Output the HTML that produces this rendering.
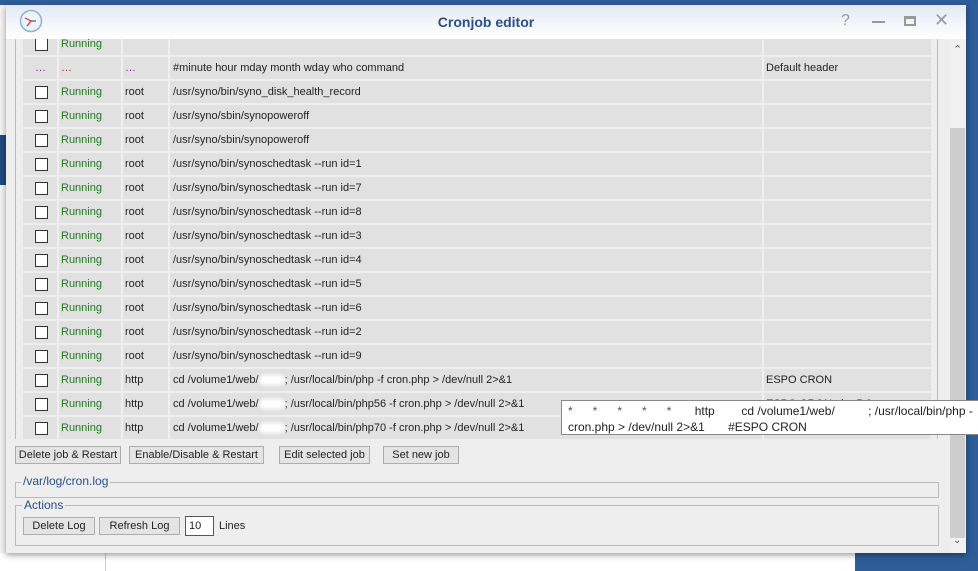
<!DOCTYPE html>
<html><head><meta charset="utf-8"><style>
*{margin:0;padding:0;box-sizing:border-box}
body{width:978px;height:571px;overflow:hidden;position:relative;background:#2e5d99;font-family:"Liberation Sans",Arial,sans-serif;font-size:11px;color:#222}
.a{position:absolute}
.win{left:6px;top:5px;width:960px;height:548px;background:#eeeeee;box-shadow:0 2px 6px rgba(0,0,0,.4)}
.title{left:0;top:0;width:960px;height:34px;background:linear-gradient(#e4eaf3,#fff)}
.row{position:absolute;left:17px;width:908px;height:22px;background:#e1e1e1}
.c{position:absolute;top:0;height:22px;line-height:22px;border-left:2px solid #f0f0f0}
.cb{position:absolute;left:12px;top:5px;width:13px;height:13px;border:1px solid #333;background:#fff}
.g{color:#1d7a1d}
.btn{position:absolute;top:441px;height:18px;border:1px solid #adadad;background:#e4e4e4;line-height:16px;text-align:center;font-size:11px}
.blob{display:inline-block;width:26px;height:10px;background:#fff;border-radius:5px;vertical-align:middle;filter:blur(1.5px)}
</style></head><body>
<div class="a" style="left:0;top:5px;width:6px;height:548px;background:#f4f4f4"></div>
<div class="a" style="left:0;top:135px;width:6px;height:50px;background:#1e4a80"></div>
<div class="a" style="left:0;top:553px;width:855px;height:18px;background:#fff"></div>
<div class="a" style="left:105px;top:553px;width:1px;height:18px;background:#ccc"></div>
<div class="a win">
 <div class="a title">
  <svg class="a" style="left:13px;top:4px" width="24" height="24" viewBox="0 0 24 24"><circle cx="12" cy="12" r="10.5" fill="#eef4fb" stroke="#8fb0d8" stroke-width="1.5"/><path d="M12 12L6 9M12 12L8 17" stroke="#c33" stroke-width="1.2"/><path d="M12 12H17" stroke="#555" stroke-width="1.2"/></svg>
  <div class="a" style="left:0;width:960px;top:9px;text-align:center;font-weight:bold;font-size:14px;color:#2b4f86">Cronjob editor</div>
  <div class="a" style="left:835px;top:7px;font-size:16px;color:#999">?</div>
  <div class="a" style="left:866px;top:16px;width:13px;height:2px;background:#999"></div>
  <div class="a" style="left:898px;top:11px;width:12px;height:10px;border:2px solid #999;border-top-width:3px"></div>
  <div class="a" style="left:928px;top:5px;font-size:18px;color:#999">✕</div>
 </div>
 <div class="a" style="left:9px;top:34px;width:1px;height:400px;background:#bbb"></div>
 <div class="a" style="left:944px;top:34px;width:16px;height:514px;background:#f0f0f0"></div>
 <div class="a" style="left:944px;top:123px;width:15px;height:410px;background:#cdcdcd"></div>
 <div class="a" style="left:947px;top:38px;font-size:11px;color:#555">⌃</div>
 <div class="a" style="left:947px;top:530px;font-size:10px;color:#555">⌄</div>
 <div class="a" style="left:931px;top:34px;width:1px;height:400px;background:#bbb"></div>
 <div id="tbl"></div>
 <div class="btn" style="left:9px;width:106px">Delete job &amp; Restart</div>
 <div class="btn" style="left:123px;width:135px">Enable/Disable &amp; Restart</div>
 <div class="btn" style="left:273px;width:91px">Edit selected job</div>
 <div class="btn" style="left:377px;width:76px">Set new job</div>
 <div class="a" style="left:9px;top:477px;width:924px;height:16px;border:1px solid #bbb"></div>
 <div class="a" style="left:15px;top:469px;background:#eee;padding:0 2px;color:#2b4f86;font-size:12px">/var/log/cron.log</div>
 <div class="a" style="left:9px;top:500px;width:924px;height:41px;border:1px solid #bbb"></div>
 <div class="a" style="left:16px;top:493px;background:#eee;padding:0 2px;color:#2b4f86;font-size:12px">Actions</div>
 <div class="btn" style="left:17px;top:512px;width:72px">Delete Log</div>
 <div class="btn" style="left:93px;top:512px;width:81px">Refresh Log</div>
 <div class="a" style="left:179px;top:511px;width:29px;height:20px;border:1px solid #555;background:#fff;line-height:18px;padding-left:3px;color:#222">10</div>
 <div class="a" style="left:213px;top:515px">Lines</div>
</div>
<div class="a" style="left:561px;top:400px;width:420px;height:35px;background:#fff;border:1px solid #888;font-size:12px;color:#222">
 <div class="a" style="left:6px;top:3px;white-space:pre;color:#555">*      *      *      *      *       <span style="color:#222">http        cd /volume1/web/          ; /usr/local/bin/php -</span></div>
 <div class="a" style="left:6px;top:19px;white-space:pre">cron.php &gt; /dev/null 2&gt;&amp;1       #ESPO CRON</div>
</div>
<script>
var rows=[["","Running","","","",1,32],["…","…","…","#minute hour mday month wday who command","Default header",0,56]];
var cmds=["/usr/syno/bin/syno_disk_health_record","/usr/syno/sbin/synopoweroff","/usr/syno/sbin/synopoweroff"];
[1,7,8,3,4,5,6,2,9].forEach(function(n){cmds.push("/usr/syno/bin/synoschedtask --run id="+n)});
var y=80;cmds.forEach(function(c){rows.push(["","Running","root",c,"",1,y]);y+=24});
rows.push(["","Running","http",'cd /volume1/web/<span class="blob"></span>; /usr/local/bin/php -f cron.php &gt; /dev/null 2&gt;&amp;1',"ESPO CRON",1,y]);y+=24;
rows.push(["","Running","http",'cd /volume1/web/<span class="blob"></span>; /usr/local/bin/php56 -f cron.php &gt; /dev/null 2&gt;&amp;1',"ESPO CRON php 5.6",1,y]);y+=24;
rows.push(["","Running","http",'cd /volume1/web/<span class="blob"></span>; /usr/local/bin/php70 -f cron.php &gt; /dev/null 2&gt;&amp;1',"",1,y]);
var h="";rows.forEach(function(r){
 var top=r[6]-4;
 h+='<div class="row" style="top:'+top+'px">'+
 '<div class="c" style="left:0;width:34px;border:0">'+(r[5]?'<div class="cb"></div>':'<span style="padding-left:12px;color:#7a2a7a">…</span>')+'</div>'+
 '<div class="c '+(r[5]?'g':'')+'" style="left:34px;width:64px;padding-left:2px;'+(r[5]?'':'color:#a03030')+'">'+r[1]+'</div>'+
 '<div class="c" style="left:98px;width:47px;padding-left:2px;'+(r[5]?'':'color:#7a2a7a')+'">'+r[2]+'</div>'+
 '<div class="c" style="left:145px;width:594px;padding-left:3px;white-space:nowrap">'+r[3]+'</div>'+
 '<div class="c" style="left:739px;width:169px;padding-left:2px;white-space:nowrap;overflow:hidden">'+r[4]+'</div></div>';
});
document.getElementById('tbl').innerHTML='<div class="a" style="left:0;top:34px;width:944px;height:402px;overflow:hidden"><div class="a" style="left:0;top:-34px;width:944px;height:470px">'+h+'</div></div>';
</script>
</body></html>
